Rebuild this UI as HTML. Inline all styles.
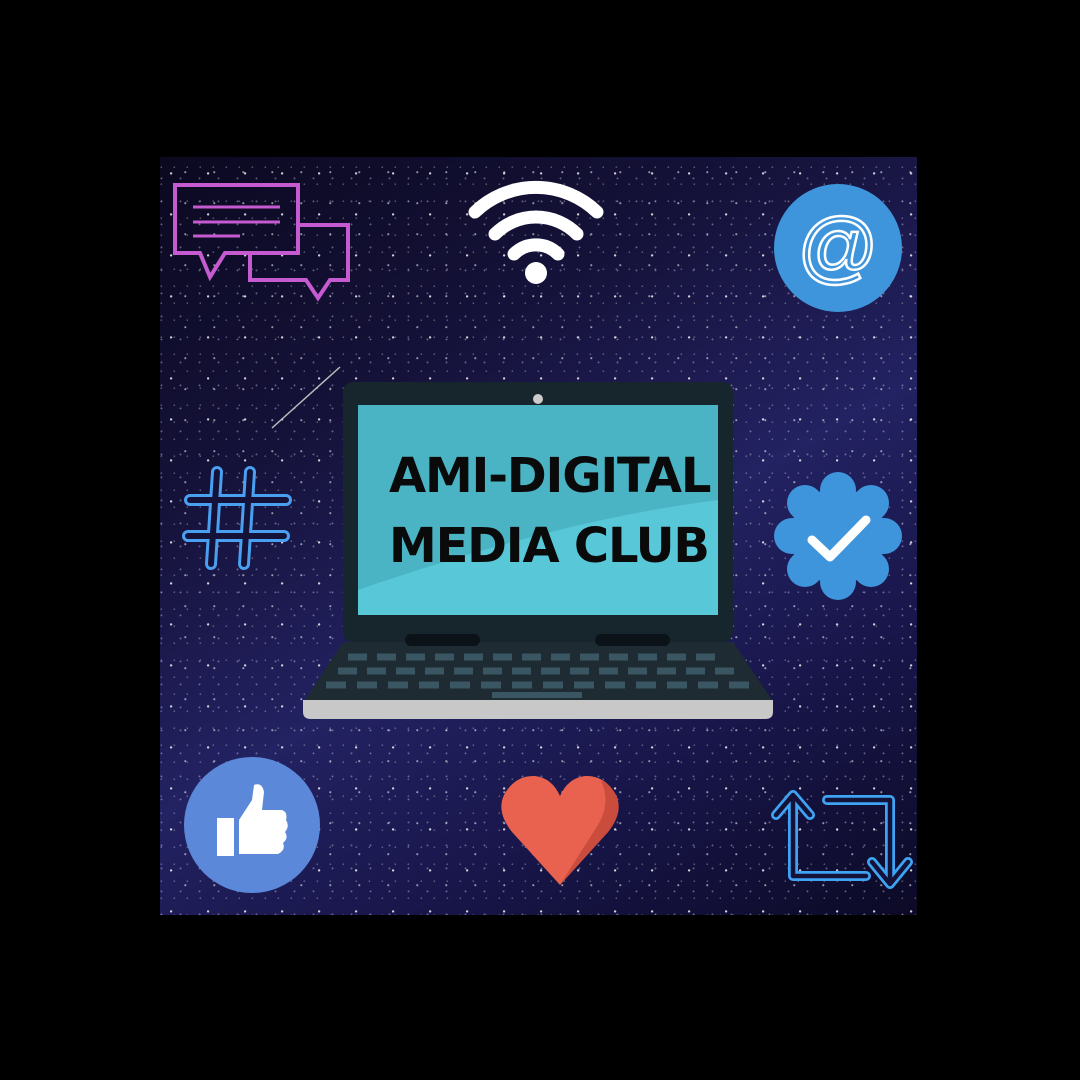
<!DOCTYPE html>
<html><head><meta charset="utf-8"><style>
html,body{margin:0;padding:0;background:#000;width:1080px;height:1080px;overflow:hidden}
#sq{position:absolute;left:160px;top:157px;width:757px;height:758px;overflow:hidden;
background:
radial-gradient(circle at 30% 40%, rgba(255,255,255,.8) 0 .9px, transparent 1.4px) 0 0/37px 41px,
radial-gradient(circle at 70% 20%, rgba(255,255,255,.55) 0 .8px, transparent 1.3px) 5px 9px/29px 31px,
radial-gradient(circle at 50% 80%, rgba(220,220,255,.4) 0 .7px, transparent 1.2px) 11px 3px/19px 23px,
radial-gradient(circle at 10% 60%, rgba(255,255,255,.3) 0 .6px, transparent 1.1px) 0 0/13px 17px,
linear-gradient(150deg, #0b0920 0%, #15123a 30%, #232262 55%, #18164a 75%, #0c0a26 100%);}
svg{position:absolute;left:0;top:0}
.t{position:absolute;left:389px;font:bold 48px "DejaVu Sans","Liberation Sans",sans-serif;color:#0a0a0a;letter-spacing:-1.2px;white-space:nowrap;line-height:1}
</style></head><body>
<div id="sq"></div>
<svg width="1080" height="1080" viewBox="0 0 1080 1080">
<g fill="none" stroke="#c65ad0" stroke-width="4">
<path d="M175 185H298V253H225L210 277L200 253H175Z"/>
<path d="M298 225H348V280H330L318 298L306 280H250V253"/>
<path d="M193 207H280M193 222H280M193 236H240" stroke-width="3"/>
</g>
<g fill="none" stroke="#fff" stroke-width="13" stroke-linecap="round">
<path d="M475 212A88 88 0 0 1 597 212"/>
<path d="M495 234A58 58 0 0 1 577 234"/>
<path d="M514 254A31 31 0 0 1 558 254"/>
</g>
<circle cx="536" cy="273" r="11" fill="#fff"/>
<circle cx="838" cy="248" r="64" fill="#3f95dc"/>
<text x="838" y="274" text-anchor="middle" font-family="Liberation Sans" font-size="80" fill="none" stroke="#fff" stroke-width="2.5">@</text>
<line x1="272" y1="428" x2="340" y2="367" stroke="#bbb" stroke-width="1.5"/>
<g fill="none" stroke-linecap="round">
<path d="M217 472L211 564M250 472L244 564M190 500H286M188 536H284" stroke="#4aa0f0" stroke-width="12"/>
<path d="M217 472L211 564M250 472L244 564M190 500H286M188 536H284" stroke="#15123a" stroke-width="6"/>
</g>
<g fill="#3f95dc"><circle cx="838" cy="536" r="48"/>
<circle cx="838" cy="490" r="18"/><circle cx="838" cy="582" r="18"/><circle cx="792" cy="536" r="18"/><circle cx="884" cy="536" r="18"/>
<circle cx="805" cy="503" r="18"/><circle cx="871" cy="503" r="18"/><circle cx="805" cy="569" r="18"/><circle cx="871" cy="569" r="18"/></g>
<path d="M812 540L830 557L866 520" fill="none" stroke="#fff" stroke-width="9" stroke-linecap="round" stroke-linejoin="round"/>
<rect x="343" y="382" width="390" height="260" rx="10" fill="#17252d"/>
<rect x="358" y="405" width="360" height="210" fill="#58c8d8"/>
<path d="M358 405H718V500Q560 520 358 590Z" fill="#4ab4c4"/>
<circle cx="538" cy="399" r="5" fill="#ccc"/>
<path d="M343 642H733L772 700H305Z" fill="#1e2b33"/>
<rect x="405" y="634" width="75" height="12" rx="6" fill="#0b1318"/>
<rect x="595" y="634" width="75" height="12" rx="6" fill="#0b1318"/>
<g stroke="#3a5662" stroke-width="7">
<line x1="348" y1="657" x2="722" y2="657" stroke-dasharray="19 10"/>
<line x1="338" y1="671" x2="738" y2="671" stroke-dasharray="19 10"/>
<line x1="326" y1="685" x2="752" y2="685" stroke-dasharray="20 11"/>
<line x1="492" y1="695" x2="582" y2="695" stroke-width="6"/>
</g>
<path d="M303 700H773V712Q773 719 765 719H311Q303 719 303 712Z" fill="#c8c8c8"/>
<circle cx="252" cy="825" r="68" fill="#5b88d8"/>
<rect x="217" y="818" width="17" height="38" fill="#fff"/>
<path d="M239 820L252 800L254 785Q262 782 264 792L262 810H282Q288 812 286 820Q290 826 285 832Q289 838 283 843Q286 850 278 854H239Z" fill="#fff"/>
<path d="M560 885L512 832Q496 812 504 795Q515 775 535 776Q552 778 560 796Q568 778 585 776Q605 775 616 795Q624 812 608 832Z" fill="#e8624f"/>
<path d="M560 885L608 832Q624 812 616 795Q611 785 601 780Q612 805 596 828Z" fill="#c94c3c"/>
<g fill="none" stroke-linejoin="round" stroke-linecap="round">
<g stroke="#3ea3f2" stroke-width="10">
<path d="M776 815L793 795L810 815M793 798V876H866"/>
<path d="M827 800H890V880M872 862L890 884L908 862"/>
</g>
<g stroke="#15123a" stroke-width="4.5">
<path d="M776 815L793 795L810 815M793 798V876H866"/>
<path d="M827 800H890V880M872 862L890 884L908 862"/>
</g>
</g>
</svg>
<div class="t" style="top:452px">AMI-DIGITAL</div>
<div class="t" style="top:522px">MEDIA CLUB</div>
</body></html>
